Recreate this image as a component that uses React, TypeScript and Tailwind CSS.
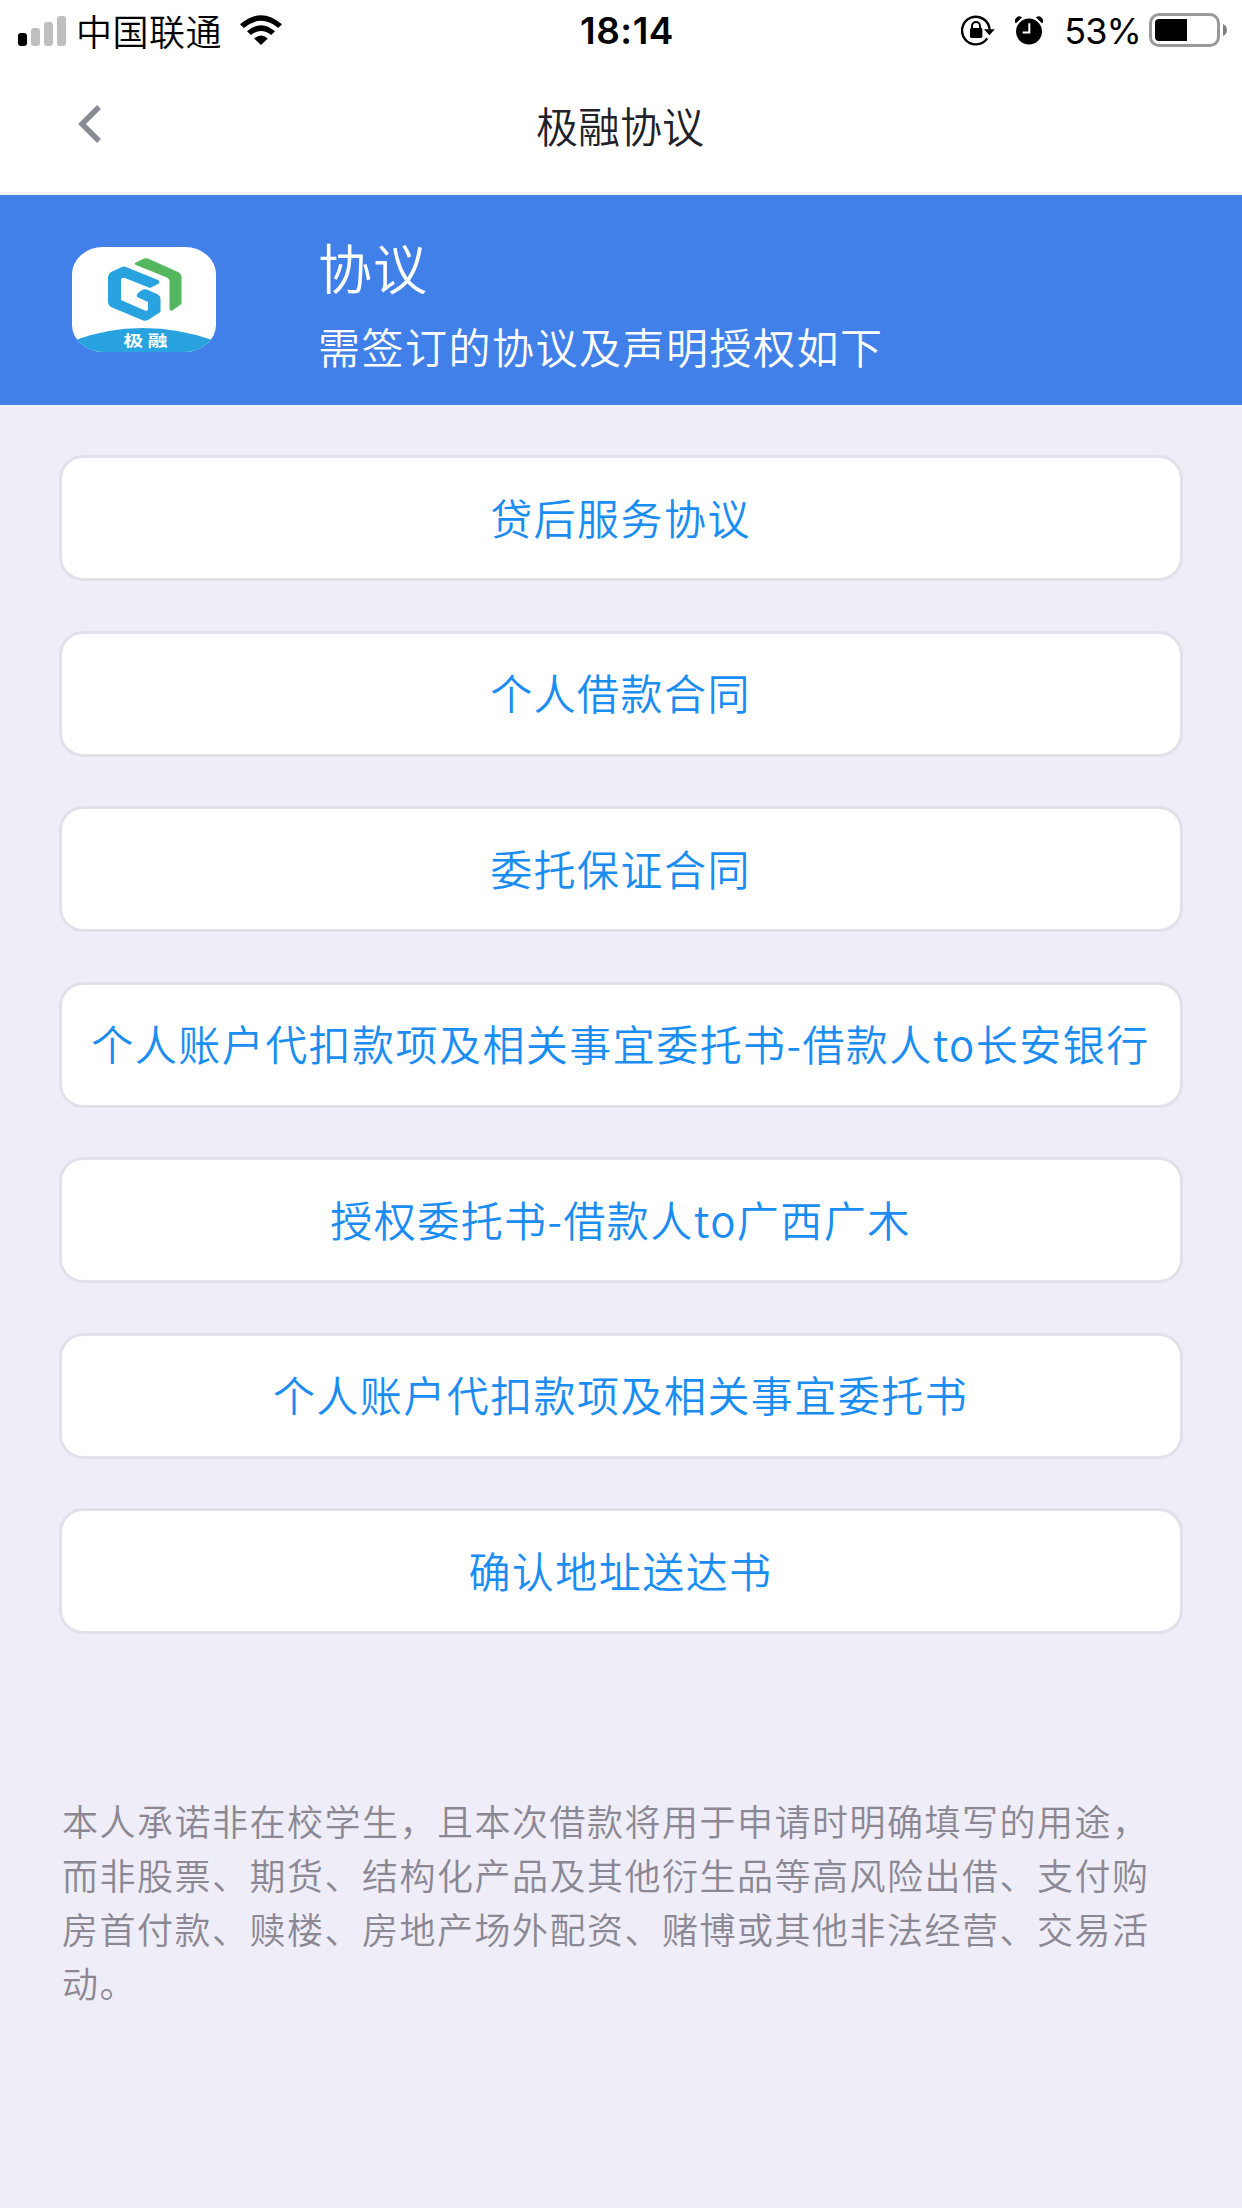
const agreements = [
  '贷后服务协议',
  '个人借款合同',
  '委托保证合同',
  '个人账户代扣款项及相关事宜委托书-借款人to长安银行',
  '授权委托书-借款人to广西广木',
  '个人账户代扣款项及相关事宜委托书',
  '确认地址送达书',
];

const noteLines = [
  '本人承诺非在校学生，且本次借款将用于申请时明确填写的用途，',
  '而非股票、期货、结构化产品及其他衍生品等高风险出借、支付购',
  '房首付款、赎楼、房地产场外配资、赌博或其他非法经营、交易活',
  '动。',
];

function SignalBars() {
  return (
    <div className="flex h-[31px] items-end gap-1">
      <span className="h-[13px] w-[9px] rounded-[3px] bg-black" />
      <span className="h-[18px] w-[9px] rounded-[3px] bg-[#bfbfbf]" />
      <span className="h-[24px] w-[9px] rounded-[3px] bg-[#bfbfbf]" />
      <span className="h-[30px] w-[9px] rounded-[3px] bg-[#bfbfbf]" />
    </div>
  );
}

function WifiIcon() {
  return (
    <svg width="42" height="30" viewBox="0 0 42 30">
      <path d="M0 9.3 Q21 -9 42 9.3 L38.2 13.1 Q21 -1.4 3.8 13.1 Z" />
      <path d="M7 16.3 Q21 4.2 35 16.3 L31.2 20.1 Q21 11.8 10.8 20.1 Z" />
      <path d="M14.2 23.4 Q21 17.8 27.8 23.4 L21 30 Z" />
    </svg>
  );
}

function RotationLockIcon() {
  return (
    <svg width="34" height="31" viewBox="0 0 34 31">
      <path d="M26.2 23.4 A13.8 13.8 0 1 1 28.6 14.5" fill="none" stroke="#000" strokeWidth="2.4" />
      <path d="M23 14.3 H33.8 L28.4 20.3 Z" />
      <path d="M11 14 V11 A4 4 0 0 1 19 11 V14" fill="none" stroke="#000" strokeWidth="2" />
      <rect x="9" y="13" width="12.4" height="10" rx="1.4" />
    </svg>
  );
}

function AlarmIcon() {
  return (
    <svg width="28" height="29" viewBox="0 0 28 29">
      <circle cx="14" cy="15.6" r="13" />
      <path d="M0.3 6.8 A4.6 4.6 0 0 1 6.6 0.9 L7.2 1.3 L1 7.2 Z" />
      <path d="M27.7 6.8 A4.6 4.6 0 0 0 21.4 0.9 L20.8 1.3 L27 7.2 Z" />
      <path d="M14.3 7.2 V16.4 H7.6" fill="none" stroke="#fff" strokeWidth="2" />
    </svg>
  );
}

function BatteryIcon() {
  return (
    <div className="flex items-center gap-[3px]">
      <div className="h-[34px] w-[71px] rounded-[10px] border-[3px] border-[#999] p-[3px]">
        <div className="h-[22px] w-[32px] rounded-l-[4px] bg-black" />
      </div>
      <svg width="4" height="12" viewBox="0 0 4 12">
        <path d="M0 0 Q4 2 4 6 Q4 10 0 12 Z" fill="#7f7f7f" />
      </svg>
    </div>
  );
}

function AppLogo() {
  return (
    <svg width="144" height="105" viewBox="0 0 144 105">
      <defs>
        <clipPath id="logoShape">
          <rect width="144" height="105" rx="31" ry="27" />
        </clipPath>
      </defs>
      <g clipPath="url(#logoShape)">
        <rect width="144" height="105" fill="#fff" />
        <path d="M0 94 Q70 68 144 94 V105 H0 Z" fill="#29a3df" />
      </g>
      <path
        d="M54 20 L86 33 Q89 35 86 37 L78 41 L53 31 Q49 30 49 34 V53 L74 64 Q76 64 76 61 V55 L65 50 Q64 48 66 46 L70 43 Q73 41.500 76 43 L86 47.500 Q88.500 49 88.500 52 V65 L76 73 Q73 74.500 70 73 L39 60 Q36 58 36 55 V30 Q36 27 39 25 L50 20 Q52 19 54 20 Z"
        fill="#29a3df"
      />
      <path
        d="M63 16 L71 12 Q74 10.500 77 12 L106 25 Q109.500 27 109.500 30 V57 L101 63 Q97.500 65 97.500 61 V34 Q97.500 32 95 30.500 L64 18 Q62 17 63 16 Z"
        fill="#54b65e"
      />
      <text x="51.500" y="98.500" fontSize="15" fontWeight="700" fill="#fff" textLength="44" lengthAdjust="spacingAndGlyphs">
        极 融
      </text>
    </svg>
  );
}

export default function App() {
  return (
    <div
      lang="zh-CN"
      className="flex h-[2208px] w-[1242px] flex-col overflow-hidden bg-[#efedf7] font-['Noto_Sans_CJK_SC',sans-serif] font-[350]"
    >
      <header className="h-[195px] border-b-[3px] border-[#efefec] bg-white">
        <div className="grid h-[60px] grid-cols-3 items-center pr-[15px] pl-[18px] text-black">
          <div className="flex items-center">
            <SignalBars />
            <span className="ml-[10px] text-[36px] leading-[60px] tracking-[0.5px]">中国联通</span>
            <span className="ml-[18px]">
              <WifiIcon />
            </span>
          </div>
          <span className="pt-[2px] pl-[9px] text-center font-[Inter,sans-serif] text-[37px] leading-[58px] font-semibold tracking-[0.5px]">
            18:14
          </span>
          <div className="flex items-center justify-end">
            <RotationLockIcon />
            <span className="ml-5">
              <AlarmIcon />
            </span>
            <span className="ml-[21px] pt-[3px] font-[Inter,sans-serif] text-[36px] leading-[57px] font-normal tracking-[-0.9px]">
              53%
            </span>
            <span className="ml-[8px]">
              <BatteryIcon />
            </span>
          </div>
        </div>
        <div className="grid h-[129px] grid-cols-[200px_1fr_200px] items-center">
          <button className="pb-[1px] pl-[78px]" aria-label="返回">
            <svg width="24" height="38" viewBox="0 0 24 38">
              <path d="M21 2 L4 19 L21 36" fill="none" stroke="#8b8b94" strokeWidth="5.500" />
            </svg>
          </button>
          <h1 className="pr-[2px] text-center text-[42px] leading-[60px] text-[#1f2229]">极融协议</h1>
        </div>
      </header>

      <section className="flex h-[210px] bg-[#4280e9] pt-[52px] pl-[72px] text-white">
        <AppLogo />
        <div className="-mt-[19px] ml-[102px]">
          <h2 className="text-[54px] leading-[78px] tracking-[1px]">协议</h2>
          <p className="text-[42px] leading-[80px] tracking-[1.5px]">需签订的协议及声明授权如下</p>
        </div>
      </section>

      <main className="flex flex-col px-[59px] pt-[50px]">
        <ul className="flex flex-col gap-[49.500px]">
          {agreements.map((name) => (
            <li
              key={name}
              className="flex h-[126px] items-center justify-center rounded-[24px] border-[3px] border-[#e2e1ea] bg-white pr-[1px] pb-[3px] text-[42px] leading-[60px] tracking-[1.45px] whitespace-nowrap text-[#1a8df2]"
            >
              {name}
            </li>
          ))}
        </ul>
        <p className="mt-[159px] ml-[3px] text-[36px] leading-[54px] tracking-[1.5px] whitespace-nowrap text-[#8b8894]">
          {noteLines.map((line) => (
            <span key={line} className="block">
              {line}
            </span>
          ))}
        </p>
      </main>
    </div>
  );
}
